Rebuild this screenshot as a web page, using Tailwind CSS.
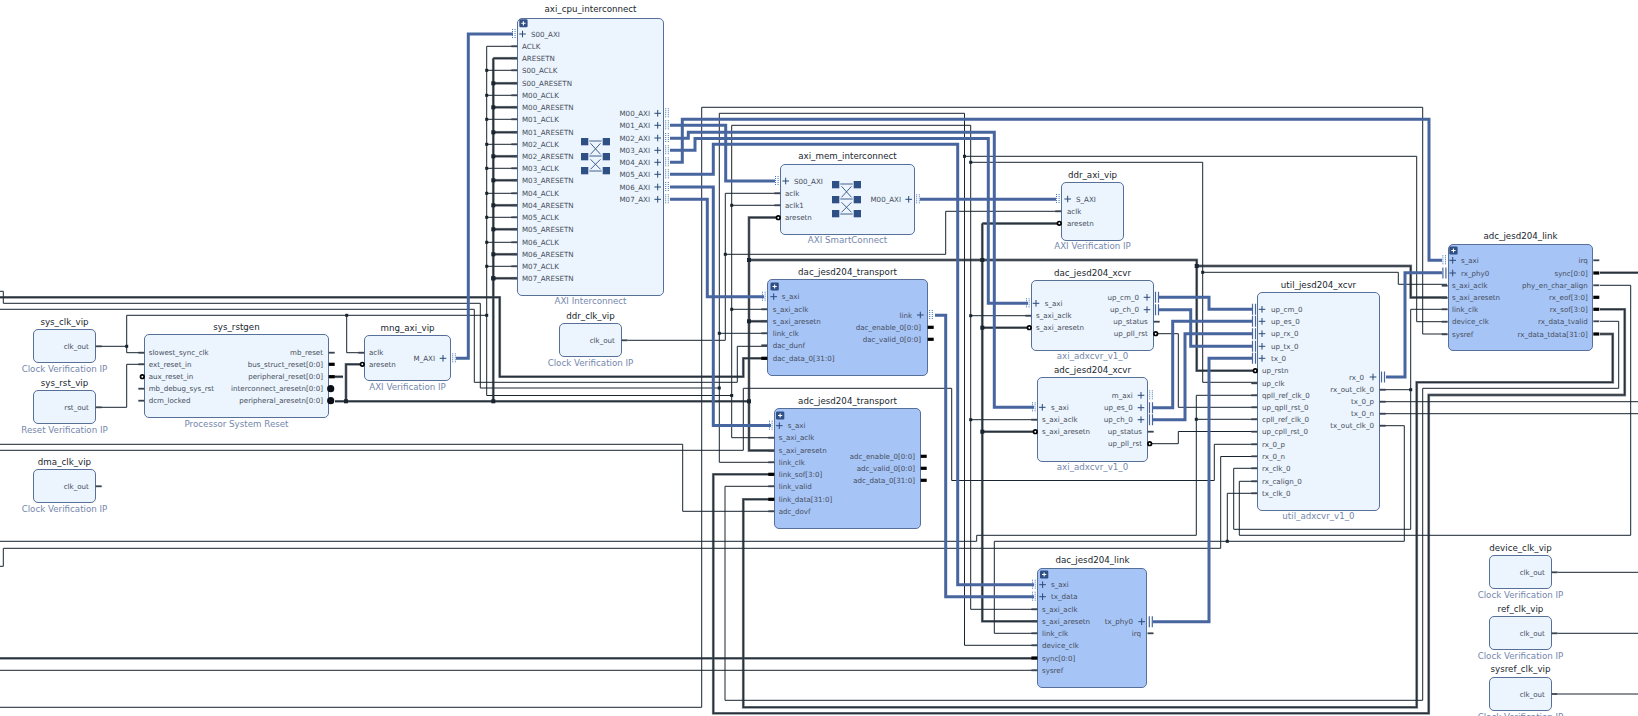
<!DOCTYPE html>
<html lang="en">
<head>
    <meta charset="UTF-8">
    <title>Block Design</title>
    <script src="https://cdn.jsdelivr.net/npm/@tailwindcss/browser@4"></script>
</head>
<body class="bg-white">
    <div id="canvas" class="relative w-[1638px] h-[716px] overflow-hidden bg-white font-['DejaVu_Sans',sans-serif]">
        <svg id="wires" class="absolute inset-0" width="1638" height="716" fill="none"></svg>
        <div id="blocks"></div>
        <svg id="marks" class="absolute inset-0" width="1638" height="716" fill="none"></svg>
        <div id="labels"></div>
    </div>

    <script>
        const thin = [
            'M0 291.3H3.3V303.3H480.3V388H719.3', 'M719.3 113.3V462.3H774', 'M719.3 333.3H767',
            'M719.3 113.3H964.5V645.3H1037', 'M964.5 156.3H1416.7V321.7H1447', 'M0 309.3H474.3V382.3H737.3V346.3H767',
            'M0 707.3H701.7V107.3H1422.7V334H1447', 'M731.7 125.3H970.7V609.3H1037', 'M731.7 125.3V437.7H774',
            'M731.7 205.3H780', 'M731.7 309.3H767', 'M486.7 395.5H731.7', 'M970.7 162.3H1202.7V382.3H1257',
            'M1202.7 272.3H1398.3V284.3H1447', 'M970.7 315.7H1031', 'M970.7 419.7H1037',
            'M101 346.3H126.7', 'M126.7 315.3V352.7H144', 'M126.7 315.3H486.7', 'M346.7 315.3V352.7H364',
            'M101 407.3H126.7V364.3H144', 'M486.7 46.3V395.5', 'M628 340.3H725.3', 'M725.3 193.3V340.3', 'M725.3 193.3H780',
            'M725.3 254.3H945.7V211.3H1061', 'M0 444.3H682.7V511.3H774', 'M0 450.3H743.3V388.3H951.7V480.5H1214.3V444.3H1257',
            'M0 541.3H976.7V535.3H1196.3V395.3H1257', 'M1196.3 419.3H1257', 'M0 566.3H3.3V548.3H1220.7V456.5H1257',
            'M1380 389.7H1410.7', 'M1410.7 309.3V529.3H1233.7V468.3H1257', 'M1410.7 309.3H1447',
            'M1239.3 481.3V535.3H1630.7V285.3H1600', 'M1239.3 481.3H1257', 'M1380 425.7H1404.3V541.3H994.3V633.3H1037',
            'M1227.3 541.3V493.3H1257', 'M1153.7 333.7H1178.3V407.3H1257', 'M1148 443.7H1178.3V431.5H1257',
            'M1380 401.7H1638', 'M1380 413.7H1638', 'M1600 321.3H1618.7V388.3H1422.7V700.3H725V486.3H774',
            'M0 670.3H1037', 'M1558 572.3H1638', 'M1558 633.3H1638', 'M1558 694H1638'
        ];
        const thick = [
            'M0 297.3H499.7V376.7H743.3V358.3H767', 'M1600 334H1612.7V382.3H1416.7V707.3H743.3V499.3H774',
            'M1600 309.3H1624.7V395H1428.7V713.3H713.3V474.3H774', 'M1600 272.7H1638', 'M0 658.3H1037',
            'M335 401.3H749', 'M346 401.3V364.3H362', 'M493.3 58.3V401.3', 'M778 217.5H749V450.5H774', 'M749 321.3H767',
            'M749 260H1196.7V370.7H1257', 'M982.3 223.5H1061', 'M982.3 223.5V621.3H1037', 'M982.3 327.7H1031',
            'M982.3 431.7H1037', 'M1196.7 266H1410.7V297.5H1447', 'M330 376.7H343'
        ];
        const bus = [
            'M456 358.3H468.3V34H513', 'M670 125.3H725.7V181H775', 'M670 138.3H688.3V132.3H994.3V407.3H1034',
            'M670 150.3H695V138.5H988.3V303.3H1028', 'M670 162.3H682.3V119.3H1429V260.3H1442', 'M670 174.3H713.3V144.3H957.7V584.7H1034',
            'M670 187H713.3V425.5H771', 'M670 199.3H707.3V296.7H764', 'M920 199.3H1056', 'M935 315.3H945.7V596.7H1034',
            'M1159 297.3H1209V309.3H1252', 'M1159 309.7H1190.7V346.3H1252', 'M1153 407.7H1172.7V321.3H1252', 'M1153 419.7H1185V333.7H1252',
            'M1252 358.3H1209V621.7H1153', 'M1386 377H1405V272.7H1442'
        ];
        const thinDots = [[126.7,346.3],[346.7,315.3],[486.7,315.3],[725.3,254.3],[731.7,205.3],[731.7,309.3],[719.3,333.3],[719.3,388],[731.7,395.5],
            [970.7,162.3],[964.5,156.3],[970.7,315.7],[970.7,419.7],[1202.7,272.3],[1196.3,419.3],[1410.7,389.7],[1227.3,541.3]];
        const thickDots = [[346,401.3],[493.3,278.3],[493.3,401.3],[749,321.3],[749,401.3],[749,260],[982.3,260],[982.3,327.7],[982.3,431.7],[1196.7,266]];

        // interconnect clock/reset ports
        const cpuPorts = [['S00_AXI',34,'a']];
        const cpuNames = ['ACLK','ARESETN','S00_ACLK','S00_ARESETN','M00_ACLK','M00_ARESETN','M01_ACLK','M01_ARESETN','M02_ACLK','M02_ARESETN',
            'M03_ACLK','M03_ARESETN','M04_ACLK','M04_ARESETN','M05_ACLK','M05_ARESETN','M06_ACLK','M06_ARESETN','M07_ACLK','M07_ARESETN'];
        const cpuY = [46.3,58.3,70.3,83.3,95.3,107.3,119.3,132.3,144.3,156.3,168.3,180.3,193.3,205.3,217.3,229.3,242.3,254.3,266.3,278.3];
        cpuNames.forEach((n, i) => {
            cpuPorts.push([n, cpuY[i], 'c']);
            if (i % 2) { thick.push('M493.3 ' + cpuY[i] + 'H517'); if (i > 1) thickDots.push([493.3, cpuY[i]]); }
            else { thin.push('M486.7 ' + cpuY[i] + 'H517'); if (i > 0) thinDots.push([486.7, cpuY[i]]); }
        });

        const clkVip = (t, x, y, sub) => ({ t, x, y, x2: x + 62.4, y2: y + 34, sub: sub || 'Clock Verification IP', rx: x + 55.5,
            R: [[t === 'sys_rst_vip' ? 'rst_out' : 'clk_out', y + 17, 'c']] });

        const blocks = [
            clkVip('sys_clk_vip', 33.3, 329.3), clkVip('sys_rst_vip', 33.3, 390.3, 'Reset Verification IP'), clkVip('dma_clk_vip', 33.3, 469.3),
            clkVip('ddr_clk_vip', 559.3, 323.3), clkVip('device_clk_vip', 1489.3, 555.3), clkVip('ref_clk_vip', 1489.3, 616.3), clkVip('sysref_clk_vip', 1489.3, 677),
            { t: 'sys_rstgen', x: 144.3, y: 334.3, x2: 328.7, y2: 418.3, sub: 'Processor System Reset', lx: 148.7, rx: 323,
              L: [['slowest_sync_clk',352.7,'c'],['ext_reset_in',364.3,'c'],['aux_reset_in',376.7,'n'],['mb_debug_sys_rst',388.7,'c'],['dcm_locked',400.7,'c']],
              R: [['mb_reset',352.7,'c'],['bus_struct_reset[0:0]',364.3,'b'],['peripheral_reset[0:0]',376.7,'b'],['interconnect_aresetn[0:0]',388.7,'N'],['peripheral_aresetn[0:0]',400.7,'N']] },
            { t: 'mng_axi_vip', x: 364.3, y: 335.3, x2: 450.7, y2: 381.3, sub: 'AXI Verification IP', lx: 369, rt: 435, rp: 443,
              L: [['aclk',352.7,'c'],['aresetn',364.3,'n']], R: [['M_AXI',358.3,'a']] },
            { t: 'axi_cpu_interconnect', x: 517.3, y: 17.7, x2: 663.7, y2: 295.7, sub: 'AXI Interconnect', titleUp: 8.7, btn: [519.3,19.3], lx: 522, px: 522.5, pt: 531, rt: 650, rp: 657.7, xbar: [581,138],
              L: cpuPorts,
              R: [['M00_AXI',113.3,'a'],['M01_AXI',125.3,'a'],['M02_AXI',138,'a'],['M03_AXI',150.3,'a'],['M04_AXI',162.3,'a'],['M05_AXI',174.3,'a'],['M06_AXI',187,'a'],['M07_AXI',199.3,'a']] },
            { t: 'axi_mem_interconnect', x: 780.3, y: 164.3, x2: 914.7, y2: 234.7, sub: 'AXI SmartConnect', titleUp: 8.3, lx: 785, px: 785.7, pt: 794, rt: 901, rp: 908.7, xbar: [832,181],
              L: [['S00_AXI',181,'a'],['aclk',193.3,'c'],['aclk1',205.3,'c'],['aresetn',217.7,'n']], R: [['M00_AXI',199.3,'a']] },
            { t: 'ddr_axi_vip', x: 1061.3, y: 182.3, x2: 1123.7, y2: 240.7, sub: 'AXI Verification IP', lx: 1067, px: 1067.7, pt: 1076,
              L: [['S_AXI',199,'a'],['aclk',211.3,'c'],['aresetn',223.3,'n']] },
            { t: 'dac_jesd204_transport', x: 767.3, y: 279.3, x2: 927.7, y2: 375.7, hier: 1, btn: [770.5,282.5], lx: 772.7, px: 773.7, pt: 781.7, rx: 921, rt: 912, rp: 920.3,
              L: [['s_axi',296.7,'a'],['s_axi_aclk',309.3,'c'],['s_axi_aresetn',321.3,'c'],['link_clk',333.3,'c'],['dac_dunf',345.3,'c'],['dac_data_0[31:0]',358.3,'b']],
              R: [['link',315,'a'],['dac_enable_0[0:0]',327.3,'b'],['dac_valid_0[0:0]',339.3,'b']] },
            { t: 'adc_jesd204_transport', x: 774.3, y: 408.3, x2: 920.7, y2: 528.7, hier: 1, btn: [776,411.5], lx: 778.7, px: 779.3, pt: 787.7, rx: 915,
              L: [['s_axi',425.7,'a'],['s_axi_aclk',437.7,'c'],['s_axi_aresetn',450.7,'c'],['link_clk',462.3,'c'],['link_sof[3:0]',474.3,'b'],['link_valid',486.3,'c'],['link_data[31:0]',499.3,'b'],['adc_dovf',511.3,'c']],
              R: [['adc_enable_0[0:0]',456.3,'b'],['adc_valid_0[0:0]',468.3,'b'],['adc_data_0[31:0]',480.3,'b']] },
            { t: 'dac_jesd204_xcvr', x: 1031.3, y: 280.3, x2: 1153.7, y2: 350.7, sub: 'axi_adxcvr_v1_0', lx: 1036, px: 1036, pt: 1044.7, rx: 1147.7, rt: 1139, rp: 1147,
              L: [['s_axi',303.3,'a'],['s_axi_aclk',315.7,'c'],['s_axi_aresetn',327.7,'n']],
              R: [['up_cm_0',297.3,'g'],['up_ch_0',309.7,'g'],['up_status',321.7,'c'],['up_pll_rst',333.7,'n']] },
            { t: 'adc_jesd204_xcvr', x: 1037.3, y: 377.3, x2: 1147.7, y2: 461.7, sub: 'axi_adxcvr_v1_0', lx: 1042, px: 1042.3, pt: 1051, rx: 1142, rt: 1132.7, rp: 1141,
              L: [['s_axi',407.3,'a'],['s_axi_aclk',419.7,'c'],['s_axi_aresetn',431.7,'n']],
              R: [['m_axi',395.3,'a'],['up_es_0',407.7,'g'],['up_ch_0',419.7,'g'],['up_status',431.7,'c'],['up_pll_rst',443.7,'n']] },
            { t: 'util_jesd204_xcvr', x: 1257.3, y: 292.3, x2: 1379.7, y2: 510.7, sub: 'util_adxcvr_v1_0', lx: 1262, px: 1262, pt: 1271, rx: 1374, rt: 1364, rp: 1373,
              L: [['up_cm_0',309.3,'g'],['up_es_0',321.3,'g'],['up_rx_0',333.7,'g'],['up_tx_0',346.3,'g'],['tx_0',358.3,'g'],['up_rstn',370.7,'n'],['up_clk',383.3,'c'],
                  ['qpll_ref_clk_0',395.3,'c'],['up_qpll_rst_0',407.3,'c'],['cpll_ref_clk_0',419.3,'c'],['up_cpll_rst_0',431.7,'c'],['rx_0_p',444.3,'c'],['rx_0_n',456.3,'c'],
                  ['rx_clk_0',468.3,'c'],['rx_calign_0',481.3,'c'],['tx_clk_0',493.3,'c']],
              R: [['rx_0',377,'g'],['rx_out_clk_0',389.7,'c'],['tx_0_p',401.7,'c'],['tx_0_n',413.7,'c'],['tx_out_clk_0',425.7,'c']] },
            { t: 'adc_jesd204_link', x: 1447.7, y: 243.7, x2: 1593.3, y2: 351.3, hier: 1, btn: [1449.3,246.5], lx: 1452, px: 1452.7, pt: 1461, rx: 1587.7,
              L: [['s_axi',260.3,'a'],['rx_phy0',273,'g'],['s_axi_aclk',285.7,'c'],['s_axi_aresetn',297.7,'c'],['link_clk',309.3,'c'],['device_clk',321.7,'c'],['sysref',334.3,'c']],
              R: [['irq',260.3,'c'],['sync[0:0]',273,'b'],['phy_en_char_align',285.3,'c'],['rx_eof[3:0]',297.3,'b'],['rx_sof[3:0]',309.3,'b'],['rx_data_tvalid',321.3,'c'],['rx_data_tdata[31:0]',334,'b']] },
            { t: 'dac_jesd204_link', x: 1037.4, y: 567.7, x2: 1147.5, y2: 687.7, hier: 1, btn: [1040,570.5], lx: 1042, px: 1042.6, pt: 1051, rx: 1141, rt: 1133, rp: 1141.7,
              L: [['s_axi',584.7,'a'],['tx_data',596.7,'a'],['s_axi_aclk',609.3,'c'],['s_axi_aresetn',621.3,'c'],['link_clk',633.3,'c'],['device_clk',645.3,'c'],['sync[0:0]',658,'b'],['sysref',670.3,'c']],
              R: [['tx_phy0',621.7,'g'],['irq',633.3,'c']] }
        ];

        let blockHtml = '', labelHtml = '', marks = '';
        const boxClass = 'absolute box-border border border-[#56709a] rounded-[5px]';
        const portText = 'absolute -translate-y-1/2 whitespace-nowrap leading-none text-[7.1px] text-[#454e5c]';
        const headText = 'absolute -translate-x-1/2 -translate-y-1/2 whitespace-nowrap leading-none text-[8.7px]';

        const plus = (x, y) => `<path d="M${x - 3.3} ${y}H${x + 3.3}M${x} ${y - 3.3}V${y + 3.3}" stroke="#2b4a78" stroke-width="1"/>`;
        const dotted = (x, y) => `<path d="M${x} ${y - 5}V${y + 5}M${x + 2.6} ${y - 5}V${y + 5}" stroke="#3f72b8" stroke-width="1" stroke-dasharray="1 1"/>`;
        const bars = (x, y) => `<path d="M${x} ${y - 5.5}V${y + 5.5}M${x + 3} ${y - 5.5}V${y + 5.5}" stroke="#47669f" stroke-width="1.2"/>`;

        function stub(edge, dir, y, kind) {
            const far = edge + dir * 6;
            if (kind === 'c') return `<path d="M${edge} ${y}H${far}" stroke="#39424f" stroke-width="1.8"/>`;
            if (kind === 'b') return `<path d="M${edge} ${y}H${far}" stroke="#000" stroke-width="3.2"/>`;
            if (kind === 'n') return `<circle cx="${edge + dir * 2}" cy="${y}" r="1.8" fill="#fff" stroke="#000" stroke-width="1.7"/>`;
            if (kind === 'N') return `<circle cx="${edge + dir * 2}" cy="${y}" r="3.6" fill="#0b0f14"/>`;
            return '';
        }

        function xbar(x, y) {
            let s = '';
            [[0,0],[21.7,0],[0,15],[21.7,15],[0,29],[21.7,29]].forEach(p => {
                s += `<rect x="${x + p[0]}" y="${y + p[1]}" width="7.3" height="7.3" fill="#2f5085"/>`;
            });
            [3,18,33].forEach(v => { s += `<path d="M${x + 8.3} ${y + v}H${x + 20.7}" stroke="#2f5085" stroke-width="0.9"/>`; });
            [[5.3,16.3],[21.3,31.3]].forEach(v => {
                s += `<path d="M${x + 9.5} ${y + v[0]}L${x + 19.5} ${y + v[1]}M${x + 19.5} ${y + v[0]}L${x + 9.5} ${y + v[1]}" stroke="#2f5085" stroke-width="0.9"/>`;
            });
            return s;
        }

        blocks.forEach(b => {
            const fill = b.hier ? 'bg-[#a7c4f6]' : 'bg-[#ecf4fd]';
            blockHtml += `<div class="${boxClass} ${fill}" style="left:${b.x}px;top:${b.y}px;width:${b.x2 - b.x}px;height:${b.y2 - b.y}px"></div>`;
            const cx = (b.x + b.x2) / 2;
            labelHtml += `<div class="${headText} text-[#20262e]" style="left:${cx}px;top:${b.y - (b.titleUp || 7.7)}px">${b.t}</div>`;
            if (b.sub) labelHtml += `<div class="${headText} text-[#7487ad]" style="left:${cx}px;top:${b.y2 + 5.6}px">${b.sub}</div>`;
            if (b.btn) {
                marks += `<rect x="${b.btn[0]}" y="${b.btn[1]}" width="8.3" height="8" rx="1.2" fill="#2f4f85"/>`;
                marks += `<path d="M${b.btn[0] + 2} ${b.btn[1] + 4}H${b.btn[0] + 6.3}M${b.btn[0] + 4.15} ${b.btn[1] + 1.9}V${b.btn[1] + 6.1}" stroke="#fff" stroke-width="1.1"/>`;
            }
            if (b.xbar) marks += xbar(b.xbar[0], b.xbar[1]);
            (b.L || []).forEach(([name, y, kind]) => {
                const iface = kind === 'a' || kind === 'g';
                labelHtml += `<div class="${portText}" style="left:${iface ? b.pt : b.lx}px;top:${y + 0.7}px">${name}</div>`;
                if (iface) {
                    marks += plus(b.px, y);
                    marks += kind === 'a' ? dotted(b.x - 4.8, y) : bars(b.x - 4.8, y);
                } else marks += stub(b.x, -1, y, kind);
            });
            (b.R || []).forEach(([name, y, kind]) => {
                const iface = kind === 'a' || kind === 'g';
                labelHtml += `<div class="${portText}" style="right:${1638 - (iface ? b.rt : b.rx)}px;top:${y + 0.7}px">${name}</div>`;
                if (iface) {
                    marks += plus(b.rp, y);
                    marks += kind === 'a' ? dotted(b.x2 + 2, y) : bars(b.x2 + 1.8, y);
                } else marks += stub(b.x2, 1, y, kind);
            });
        });

        const path = (d, color, width) => `<path d="${d}" stroke="${color}" stroke-width="${width}"/>`;
        let wireHtml = '';
        thick.forEach(d => { wireHtml += path(d, '#8b9096', 2.8); });
        thin.forEach(d => { wireHtml += path(d, '#18242f', 1); });
        thick.forEach(d => { wireHtml += path(d, '#28323d', 1.6); });
        bus.forEach(d => { wireHtml += path(d, '#47669f', 3); });
        thinDots.forEach(p => { wireHtml += `<rect x="${p[0] - 1.5}" y="${p[1] - 1.5}" width="3" height="3" fill="#18242f"/>`; });
        thickDots.forEach(p => { wireHtml += `<rect x="${p[0] - 2}" y="${p[1] - 2}" width="4" height="4" fill="#18242f"/>`; });

        document.getElementById('wires').innerHTML = wireHtml;
        document.getElementById('blocks').innerHTML = blockHtml;
        document.getElementById('marks').innerHTML = marks;
        document.getElementById('labels').innerHTML = labelHtml;
    </script>
</body>
</html>
